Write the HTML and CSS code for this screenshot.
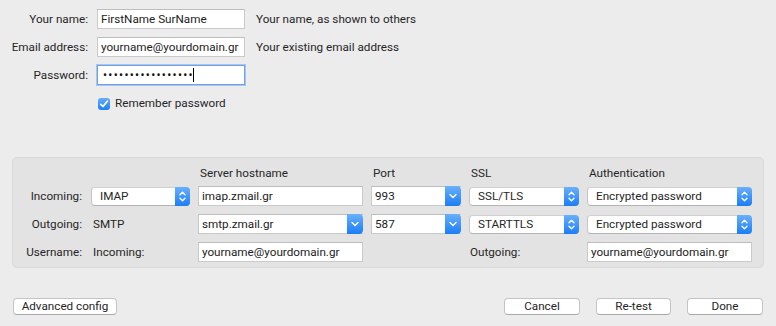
FILE: index.html
```html
<!DOCTYPE html>
<html lang="en">
<head>
  <meta charset="UTF-8">
  <title>Mail account setup</title>
  <link rel="stylesheet" href="styles.css">
</head>
<body>
  <!-- ACCOUNT DETAILS -->
  <div class="account">
    <label class="row-label" for="name">Your name:</label>
    <input class="field" type="text" id="name" value="FirstName SurName">
    <span class="hint">Your name, as shown to others</span>

    <label class="row-label" for="email">Email address:</label>
    <input class="field" type="text" id="email" value="yourname@yourdomain.gr">
    <span class="hint">Your existing email address</span>

    <label class="row-label">Password:</label>
    <div class="field field-focus">
      <span class="dots">•••••••••••••••••</span><span class="caret"></span>
    </div>
    <span></span>

    <div class="remember">
      <span class="checkbox">
        <svg width="12" height="12" viewBox="0 0 12 12"><polyline points="2.8,6.3 5,8.5 9.3,3.2" fill="none" stroke="#fff" stroke-width="1.7" stroke-linecap="round" stroke-linejoin="round"/></svg>
      </span>
      <span>Remember password</span>
    </div>
  </div>

  <!-- SERVER SETTINGS -->
  <div class="server-panel">
    <span></span>
    <span></span>
    <span class="col-head">Server hostname</span>
    <span class="col-head">Port</span>
    <span class="col-head">SSL</span>
    <span class="col-head">Authentication</span>

    <!-- incoming -->
    <span class="row-label">Incoming:</span>
    <div class="popup">
      <span class="popup-value">IMAP</span>
      <span class="stepper"><svg width="15" height="19" viewBox="0 0 15 19"><polyline points="5,7.8 7.5,5.3 10,7.8" /><polyline points="5,11.2 7.5,13.7 10,11.2" /></svg></span>
    </div>
    <input class="field" type="text" value="imap.zmail.gr">
    <div class="combo">
      <span class="combo-value">993</span>
      <span class="combo-btn"><svg width="16" height="20" viewBox="0 0 16 20"><polyline points="5,8.5 8,11.5 11,8.5" /></svg></span>
    </div>
    <div class="popup">
      <span class="popup-value">SSL/TLS</span>
      <span class="stepper"><svg width="15" height="19" viewBox="0 0 15 19"><polyline points="5,7.8 7.5,5.3 10,7.8" /><polyline points="5,11.2 7.5,13.7 10,11.2" /></svg></span>
    </div>
    <div class="popup">
      <span class="popup-value">Encrypted password</span>
      <span class="stepper"><svg width="15" height="19" viewBox="0 0 15 19"><polyline points="5,7.8 7.5,5.3 10,7.8" /><polyline points="5,11.2 7.5,13.7 10,11.2" /></svg></span>
    </div>

    <!-- outgoing -->
    <span class="row-label">Outgoing:</span>
    <span class="plain">SMTP</span>
    <div class="combo">
      <span class="combo-value">smtp.zmail.gr</span>
      <span class="combo-btn"><svg width="16" height="20" viewBox="0 0 16 20"><polyline points="5,8.5 8,11.5 11,8.5" /></svg></span>
    </div>
    <div class="combo">
      <span class="combo-value">587</span>
      <span class="combo-btn"><svg width="16" height="20" viewBox="0 0 16 20"><polyline points="5,8.5 8,11.5 11,8.5" /></svg></span>
    </div>
    <div class="popup">
      <span class="popup-value">STARTTLS</span>
      <span class="stepper"><svg width="15" height="19" viewBox="0 0 15 19"><polyline points="5,7.8 7.5,5.3 10,7.8" /><polyline points="5,11.2 7.5,13.7 10,11.2" /></svg></span>
    </div>
    <div class="popup">
      <span class="popup-value">Encrypted password</span>
      <span class="stepper"><svg width="15" height="19" viewBox="0 0 15 19"><polyline points="5,7.8 7.5,5.3 10,7.8" /><polyline points="5,11.2 7.5,13.7 10,11.2" /></svg></span>
    </div>

    <!-- username -->
    <span class="row-label">Username:</span>
    <span class="plain">Incoming:</span>
    <input class="field" type="text" value="yourname@yourdomain.gr">
    <span></span>
    <span class="plain plain-tight">Outgoing:</span>
    <input class="field" type="text" value="yourname@yourdomain.gr">
  </div>

  <!-- BUTTONS -->
  <div class="footer">
    <button class="btn btn-advanced">Advanced config</button>
    <button class="btn">Cancel</button>
    <button class="btn btn-narrow">Re-test</button>
    <button class="btn">Done</button>
  </div>
</body>
</html>
```

FILE: styles.css
```css
body {
  margin: 0;
  width: 776px;
  height: 326px;
  overflow: hidden;
  background-color: #ececec;
  font-family: 'Roboto', 'Liberation Sans', sans-serif;
  font-size: 11.7px;
  line-height: 15px;
  color: #262626;
}

/* top block */
.account {
  display: grid;
  grid-template-columns: 88px 148px auto;
  column-gap: 9px;
  row-gap: 8px;
  align-items: center;
  padding-top: 9px;
}

.row-label {
  text-align: right;
}

.hint {
  padding-left: 2px;
}

.field {
  box-sizing: border-box;
  width: 100%;
  height: 20px;
  margin: 0;
  padding: 0 3px;
  background-color: #fff;
  border: 1px solid #cacaca;
  border-top-color: #bdbdbd;
  border-radius: 0;
  font: inherit;
  color: #222;
  outline: none;
}

.field-focus {
  display: flex;
  align-items: center;
  border-color: #6fa2e6;
  box-shadow: 0 0 0 1px #a6c6f1;
  padding-left: 5px;
}

.dots {
  letter-spacing: 1.3px;
  font-size: 12px;
  color: #111;
}

.caret {
  width: 1px;
  height: 14px;
  margin-left: -1px;
  background-color: #000;
}

.remember {
  grid-column: 2 / span 2;
  display: flex;
  align-items: center;
  gap: 5px;
  margin-top: 3px;
  padding-left: 1px;
}

.checkbox {
  width: 12px;
  height: 12px;
  border-radius: 3px;
  background: linear-gradient(#64acfa, #1f80f6);
  display: flex;
}

/* server panel */
.server-panel {
  margin: 46px 12px 0;
  padding: 8px 0 5px;
  background-color: #e3e3e3;
  border: 1px solid #d9d9d9;
  border-radius: 5px;
  display: grid;
  grid-template-columns: 70px 99px 165px 90px 110px 165px;
  column-gap: 8px;
  row-gap: 8px;
  align-items: center;
}

.server-panel .row-label {
  padding-right: 1px;
}

.col-head {
  padding-left: 2px;
  margin-bottom: -3px;
}

.plain {
  padding-left: 2px;
}

.plain-tight {
  padding-left: 1px;
}

.popup {
  box-sizing: border-box;
  height: 19px;
  display: flex;
  align-items: center;
  background-color: #fff;
  border: 1px solid #c6c6c6;
  border-top-color: #d0d0d0;
  border-bottom-color: #b4b4b4;
  border-radius: 4px;
}

.popup-value {
  flex: 1;
  padding-left: 8px;
  white-space: nowrap;
}

.stepper {
  width: 15px;
  height: 19px;
  margin: -1px -1px -1px 0;
  border-radius: 0 4px 4px 0;
  background: linear-gradient(#6ab0fb, #1b7df6);
}

.stepper svg,
.combo-btn svg {
  display: block;
  fill: none;
  stroke: #fff;
  stroke-width: 1.4;
  stroke-linecap: round;
  stroke-linejoin: round;
}

.combo {
  box-sizing: border-box;
  height: 20px;
  display: flex;
  align-items: center;
  background-color: #fff;
  border: 1px solid #cacaca;
  border-top-color: #bdbdbd;
  border-right: none;
}

.combo-value {
  flex: 1;
  padding-left: 3px;
  color: #222;
}

.combo-btn {
  width: 16px;
  height: 20px;
  margin: -1px 0;
  border-radius: 0 4px 4px 0;
  background: linear-gradient(#6ab0fb, #1b7df6);
}

/* footer buttons */
.footer {
  display: flex;
  gap: 16px;
  margin-top: 30px;
  padding: 0 13px;
}

.btn {
  box-sizing: border-box;
  width: 76px;
  height: 17px;
  padding: 0;
  background-color: #fff;
  border: 1px solid #c4c4c4;
  border-bottom-color: #a9a9a9;
  border-radius: 4px;
  font: inherit;
  line-height: 15px;
  color: #262626;
}

.btn-narrow {
  width: 75px;
}

.btn-advanced {
  width: 104px;
  margin-right: auto;
}
```
